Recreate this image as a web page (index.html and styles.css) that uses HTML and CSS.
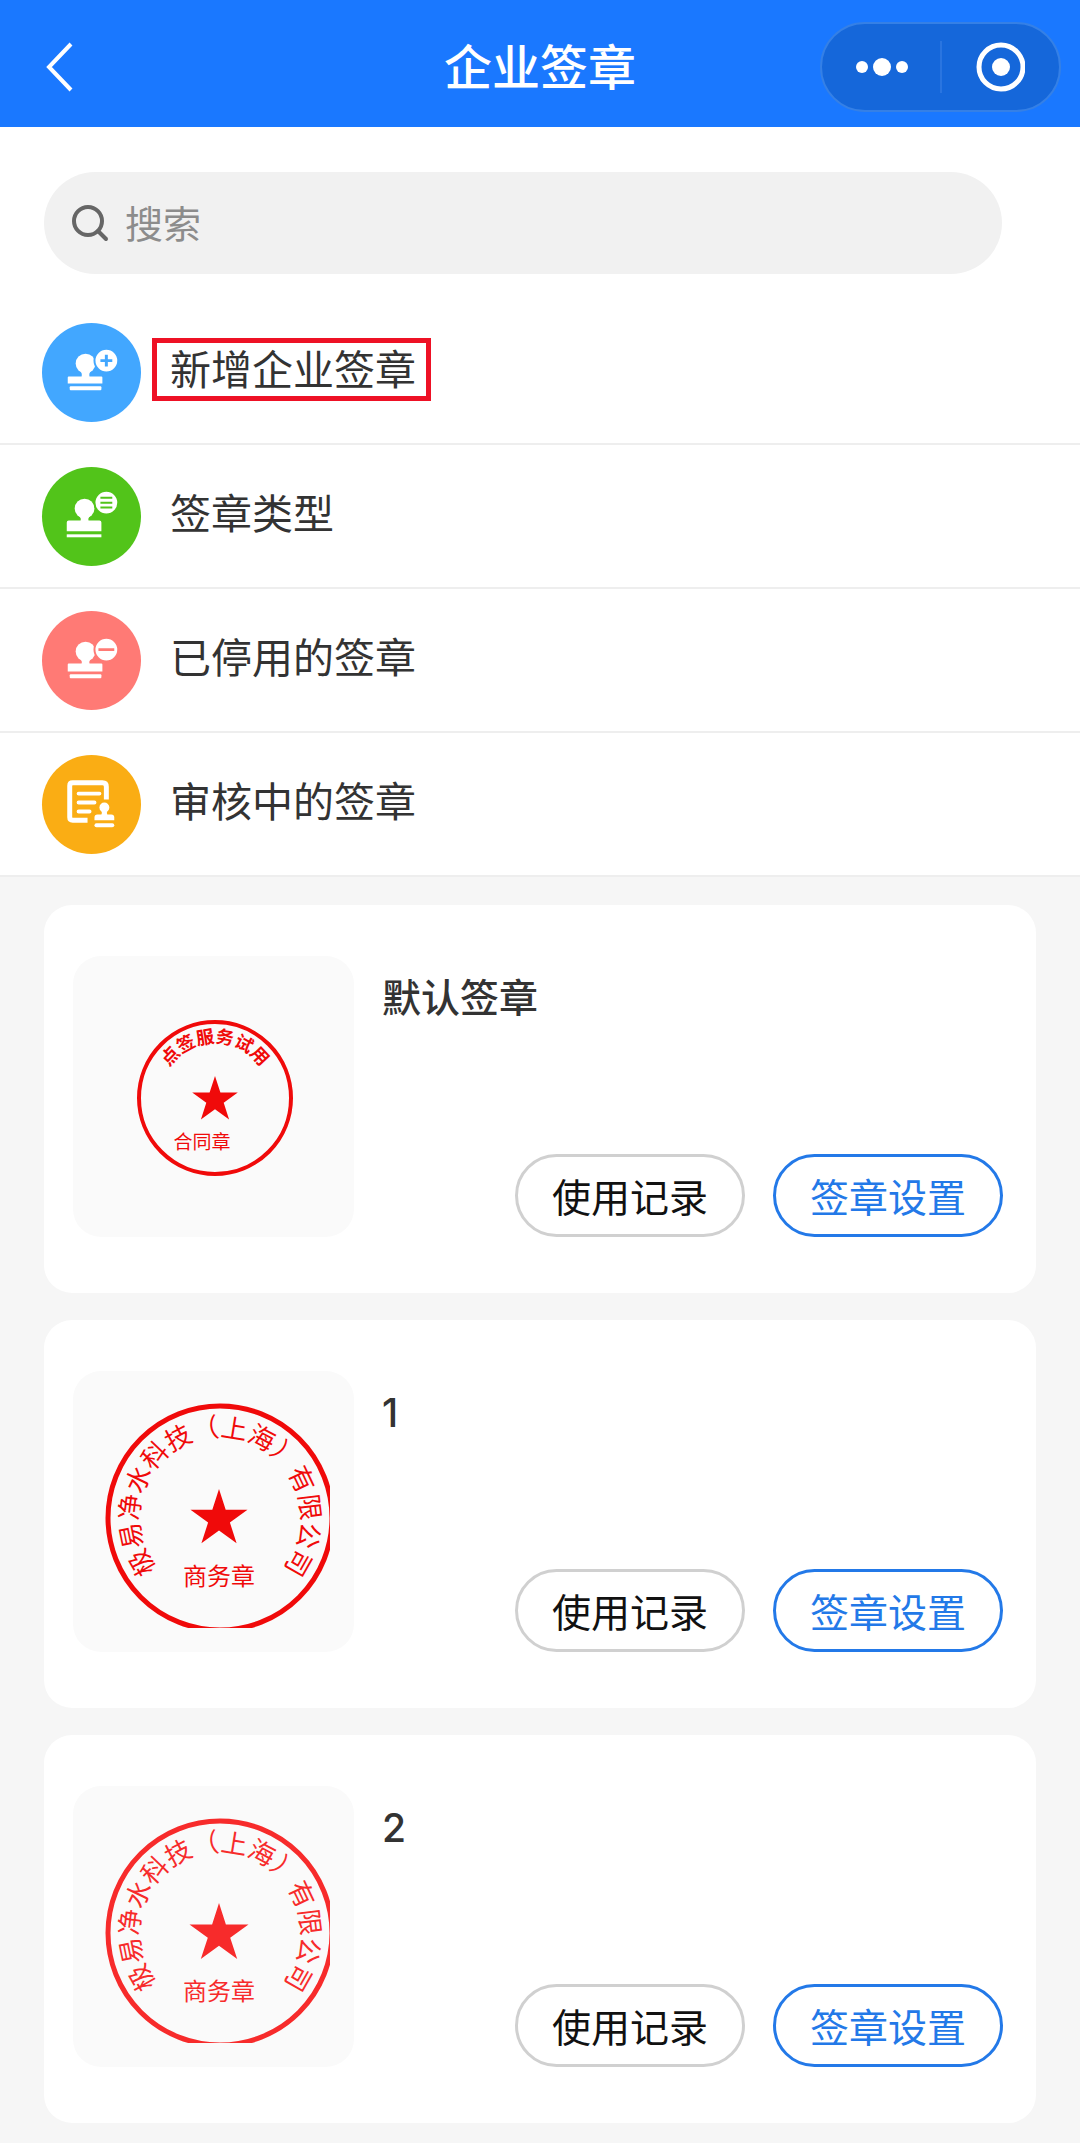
FILE: index.html
```html
<!DOCTYPE html>
<html lang="zh-CN">
<head>
  <meta charset="UTF-8">
  <meta name="viewport" content="width=device-width, initial-scale=1.0">
  <title>企业签章</title>
  <link rel="stylesheet" href="styles.css">
</head>
<body>
  <header class="navbar">
    <button class="back" type="button" aria-label="返回">
      <svg width="28" height="50" viewBox="0 0 28 50"><path d="M25 2 L3 25 L25 48" fill="none" stroke="#fff" stroke-width="4"/></svg>
    </button>
    <h1>企业签章</h1>
    <div class="capsule">
      <button type="button" aria-label="更多">
        <svg width="54" height="20" viewBox="0 0 54 20" fill="#fff">
          <circle cx="8" cy="10" r="6"/><circle cx="28" cy="10" r="9"/><circle cx="48" cy="10" r="6"/>
        </svg>
      </button>
      <button type="button" aria-label="关闭">
        <svg width="50" height="50" viewBox="0 0 50 50">
          <circle cx="26" cy="25" r="22" fill="none" stroke="#fff" stroke-width="5"/>
          <circle cx="26" cy="25" r="9" fill="#fff"/>
        </svg>
      </button>
    </div>
  </header>

  <main>
    <section class="panel">
      <label class="search">
        <svg width="38" height="38" viewBox="0 0 38 38" fill="none" stroke="#666" stroke-width="4" stroke-linecap="round">
          <circle cx="17" cy="17" r="14"/><path d="M27 27 L35 35"/>
        </svg>
        <input type="search" placeholder="搜索" aria-label="搜索">
      </label>

      <nav class="menu">
        <a href="#add">
          <svg class="icon blue" viewBox="0 0 100 100" fill="#fff">
            <circle cx="44" cy="41" r="10"/>
            <path d="M38 47 H50 Q47 51 48 54 H60 Q61 54 61 55 V61 H26 V55 Q26 54 27 54 H40 Q41 51 38 47 Z"/>
            <rect x="28" y="64" width="32" height="4" rx="1"/>
            <circle class="badge" cx="65" cy="38" r="12"/>
            <path class="cut" d="M59 38 H71 M65 32 V44"/>
          </svg>
          <span class="label marked">新增企业签章</span>
        </a>
        <a href="#types">
          <svg class="icon green" viewBox="0 0 100 100" fill="#fff">
            <circle cx="43" cy="42" r="10"/>
            <path d="M36 48 H50 Q46 51 47 54 H58 Q60 54 60 56 V65 H25 V56 Q25 54 27 54 H39 Q40 51 36 48 Z"/>
            <rect x="25" y="68" width="35" height="3"/>
            <circle class="badge" cx="65" cy="36" r="12"/>
            <path class="cut thin" d="M59 31 H71 M59 36 H71 M59 41 H71"/>
          </svg>
          <span class="label">签章类型</span>
        </a>
        <a href="#disabled">
          <svg class="icon red" viewBox="0 0 100 100" fill="#fff">
            <circle cx="44" cy="41" r="10"/>
            <path d="M38 47 H50 Q47 51 48 53 H60 Q61 53 61 54 V61 H26 V54 Q26 53 27 53 H40 Q41 51 38 47 Z"/>
            <rect x="28" y="64" width="32" height="4" rx="1"/>
            <circle class="badge" cx="65" cy="39" r="12"/>
            <path class="cut" d="M57 39 H73"/>
          </svg>
          <span class="label">已停用的签章</span>
        </a>
        <a href="#pending">
          <svg class="icon orange" viewBox="0 0 100 100" fill="#fff">
            <path d="M46 66 H31 Q28 66 28 63 V31 Q28 28 31 28 H61 Q65 28 65 32 V45" fill="none" stroke="#fff" stroke-width="5"/>
            <path d="M37 39 H58 M37 48 H53 M37 57 H48" fill="none" stroke="#fff" stroke-width="4" stroke-linecap="round"/>
            <circle cx="63" cy="53" r="5"/>
            <path d="M60 56 H66 Q65 59 66 60 H70 Q73 60 73 63 V66 H53 V63 Q53 60 56 60 H60 Q61 59 60 56 Z"/>
            <rect x="53" y="69" width="20" height="4" rx="2"/>
          </svg>
          <span class="label">审核中的签章</span>
        </a>
      </nav>
    </section>

    <section class="cards">
      <article class="card">
        <svg class="stamp small" viewBox="0 0 281 281">
          <path id="arc1" d="M87 142 A55 55 0 0 1 197 142" fill="none"/>
          <circle cx="142" cy="142" r="76"/>
          <text class="ring-text"><textPath href="#arc1" startOffset="50%">点签服务试用</textPath></text>
          <polygon points="142,120 147.4,136.6 164.8,136.6 150.7,146.8 156.1,163.4 142,153.2 127.9,163.4 133.3,146.8 119.2,136.6 136.6,136.6"/>
          <text class="kind" x="129" y="193">合同章</text>
        </svg>
        <div class="info">
          <h2>默认签章</h2>
          <div class="actions">
            <button type="button">使用记录</button>
            <button type="button" class="primary">签章设置</button>
          </div>
        </div>
      </article>

      <article class="card">
        <svg class="stamp" viewBox="0 0 281 281">
          <clipPath id="edge"><rect x="32" y="32" width="225" height="225"/></clipPath>
          <path id="arc2" d="M147 228 A81 81 0 0 1 147 66 A81 81 0 0 1 147 228" fill="none"/>
          <circle cx="147" cy="147" r="112" clip-path="url(#edge)"/>
          <text class="ring-text"><textPath href="#arc2" startOffset="50%">极易净水科技（上海）有限公司</textPath></text>
          <polygon points="146,118 152.7,138.7 174.5,138.7 156.9,151.5 163.6,172.3 146,159.5 128.4,172.3 135.1,151.5 117.5,138.7 139.3,138.7"/>
          <text class="kind" x="146" y="214">商务章</text>
        </svg>
        <div class="info">
          <h2>1</h2>
          <div class="actions">
            <button type="button">使用记录</button>
            <button type="button" class="primary">签章设置</button>
          </div>
        </div>
      </article>

      <article class="card">
        <svg class="stamp light" viewBox="0 0 281 281">
          <circle cx="147" cy="147" r="112" clip-path="url(#edge)"/>
          <text class="ring-text"><textPath href="#arc2" startOffset="50%">极易净水科技（上海）有限公司</textPath></text>
          <polygon points="146,117 152.9,138.4 175.5,138.4 157.2,151.7 164.2,173 146,159.8 127.8,173 134.8,151.7 116.5,138.4 139.1,138.4"/>
          <text class="kind" x="146" y="214">商务章</text>
        </svg>
        <div class="info">
          <h2>2</h2>
          <div class="actions">
            <button type="button">使用记录</button>
            <button type="button" class="primary">签章设置</button>
          </div>
        </div>
      </article>
    </section>
  </main>
</body>
</html>
```

FILE: styles.css
```css
* {
  box-sizing: border-box;
}
body {
  margin: 0;
  background-color: #f6f6f6;
  color: #333;
  font-family: Inter, "Noto Sans CJK SC", sans-serif;
}
button {
  font-family: inherit;
  cursor: pointer;
}
svg {
  display: block;
}

.navbar {
  display: grid;
  grid-template-columns: 1fr auto 1fr;
  align-items: center;
  height: 127px;
  padding: 6px 19px 0;
  background-color: #1a78ff;
  color: white;
}
.navbar h1 {
  margin: 0;
  padding-top: 3px;
  font-size: 48px;
  font-weight: 500;
  line-height: 60px;
}
.navbar button {
  display: flex;
  align-items: center;
  justify-content: center;
  border: none;
  background: none;
}
.back {
  justify-self: start;
  padding: 16px 27px;
}
.capsule {
  justify-self: end;
  display: flex;
  align-items: center;
  width: 241px;
  height: 90px;
  border: 2px solid #3580e6;
  border-radius: 45px;
  background-color: #1567da;
}
.capsule button {
  flex: 1;
  height: 52px;
  padding: 0;
}
.capsule button + button {
  border-left: 2px solid #2a75e0;
}

.panel {
  padding-top: 45px;
  background-color: white;
}
.search {
  display: flex;
  align-items: center;
  gap: 16px;
  height: 102px;
  margin: 0 78px 27px 44px;
  padding: 0 27px;
  border-radius: 51px;
  background-color: #f1f1f1;
}
.search input {
  flex: 1;
  min-width: 0;
  padding: 2px 0 0;
  border: none;
  outline: none;
  background: none;
  font-family: inherit;
  font-size: 38px;
  line-height: 54px;
}
.search input::placeholder {
  color: #8c8c8c;
}

.menu a {
  display: flex;
  align-items: center;
  gap: 11px;
  padding: 22px 42px 21px;
  border-bottom: 2px solid #eee;
  color: #333;
  text-decoration: none;
}
.icon {
  width: 99px;
  height: 99px;
  border-radius: 50%;
  background-color: var(--tone);
}
.icon .badge {
  stroke: var(--tone);
  stroke-width: 2px;
}
.icon .cut {
  stroke: var(--tone);
  stroke-width: 3px;
}
.icon .thin {
  stroke-width: 2px;
}
.blue { --tone: #42a7ff; }
.green { --tone: #52c41a; }
.red { --tone: #ff7a75; }
.orange { --tone: #faad14; }
.label {
  margin-bottom: 6px;
  padding: 1px 10px 0 13px;
  border: 5px solid transparent;
  font-size: 41px;
  line-height: 52px;
}
.marked {
  border-color: #ee1125;
}

.cards {
  display: flex;
  flex-direction: column;
  gap: 27px;
  padding: 28px 44px 20px;
}
.card {
  display: flex;
  gap: 28px;
  padding: 51px 33px 56px 29px;
  border-radius: 28px;
  background-color: white;
}
.stamp {
  flex: none;
  width: 281px;
  height: 281px;
  border-radius: 28px;
  background-color: #fafafa;
  --ink: #f00a0a;
}
.light {
  --ink: #f72b2b;
}
.stamp circle {
  fill: none;
  stroke: var(--ink);
  stroke-width: 5px;
}
.stamp polygon {
  fill: var(--ink);
}
.stamp text {
  fill: var(--ink);
  font-family: "Noto Sans CJK SC", sans-serif;
  font-weight: 400;
  text-anchor: middle;
}
.ring-text {
  font-size: 26px;
}
.kind {
  font-size: 24px;
}
.small circle {
  stroke-width: 4px;
}
.small .ring-text {
  font-size: 18px;
  font-weight: 700;
}
.small .kind {
  font-size: 19px;
}

.info {
  flex: 1;
  display: flex;
  flex-direction: column;
  justify-content: space-between;
}
.info h2 {
  margin: 15px 0 0;
  font-size: 39px;
  font-weight: 500;
  line-height: 54px;
}
.actions {
  display: flex;
  justify-content: flex-end;
  gap: 28px;
}
.actions button {
  width: 230px;
  height: 83px;
  padding: 0 0 2px;
  border: 3px solid #d0d0d0;
  border-radius: 42px;
  background-color: white;
  color: #111;
  font-size: 39px;
}
.actions .primary {
  border-color: #2379e8;
  color: #2379e8;
}
```
